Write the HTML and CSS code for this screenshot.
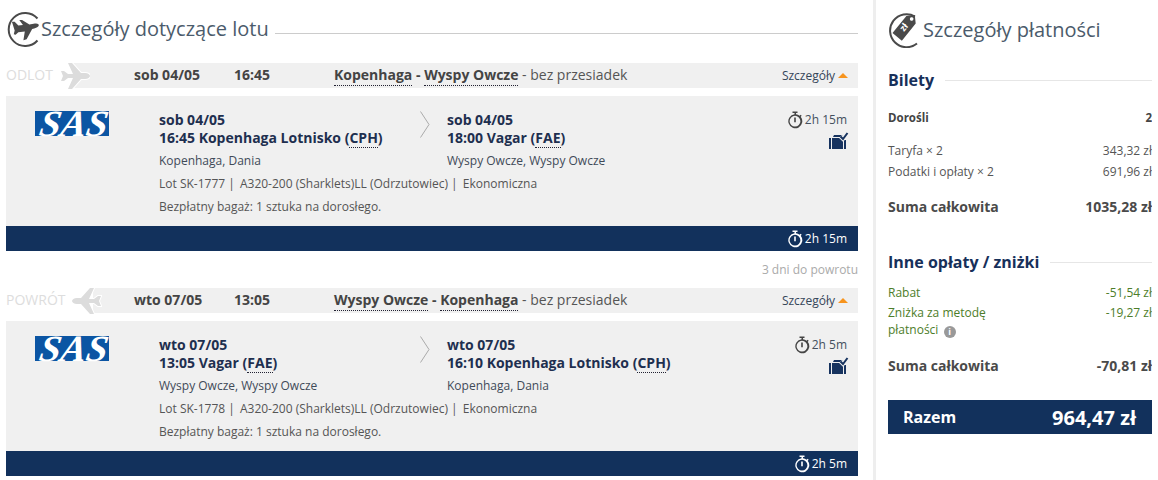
FILE: index.html
```html
<!DOCTYPE html>
<html lang="pl">
<head>
<meta charset="utf-8">
<title>Szczegóły</title>
<link rel="stylesheet" href="styles.css">
</head>
<body>
<svg class="defs" width="0" height="0" aria-hidden="true">
  <defs>
    <symbol id="plane" viewBox="0 0 30 26"><path d="M1 8 L4 8 L8 11 L13 11 L8 0 L12 0 L21 10 L25 10 C28 10 30 11.500 30 13 C30 14.500 28 16 25 16 L21 16 L12 26 L8 26 L13 15 L8 15 L4 18 L1 18 L3 13 Z"/></symbol>
    <symbol id="watch" viewBox="0 0 16 18"><path d="M5.500 0.500h5v1.600h-1.500v1.200a7 7 0 0 1 3.600 1.400l1-1 1.100 1.100-1 1a7 7 0 1 1-6.200-2.500v-1.200H5.500z M8 4.800a5.400 5.400 0 1 0 0 10.800a5.400 5.400 0 0 0 0-10.800z M7.200 6.500h1.600v4.800H7.200z"/></symbol>
    <symbol id="bag" viewBox="0 0 20 17"><path d="M0 6h2v11H0z M3 6h11v11H3z M5 3h8l1 2H4z" /><path d="M15 8h2v9h-2z"/><path d="M11.500 4.500l2.500 2.500l4.500-6" fill="none" stroke="#f0f0f0" stroke-width="4"/><path d="M11.500 4.500l2.500 2.500l4.500-6" fill="none" stroke="currentColor" stroke-width="2"/></symbol>
  </defs>
</svg>
<div class="page">
  <main class="flight-col">
    <header class="heading">
      <svg class="head-icon" viewBox="0 0 36 36"><path class="ring" d="M31.500 7.500A16.500 16.500 0 1 0 31.500 29.500"/><g transform="translate(5 8) scale(.92)"><path d="M1 3 L4 3 L8 7 L13 6.500 L9 1 L12 1 L20 6 L26 5 C29 4.500 31 6 30 7.500 C29 9 26 10 23 11 L17 22 L13.500 23 L15 13.500 L8 14.500 L5 17 L3 16.500 L4 12.500 Z"/></g></svg>
      <h1 class="heading-text">Szczegóły dotyczące lotu</h1>
      <span class="rule"></span>
    </header>

    <section class="leg">
      <div class="summary">
        <span class="summary-label label-out">ODLOT</span>
        <svg class="summary-plane plane-out"><use href="#plane"/></svg>
        <span class="summary-date">sob 04/05</span>
        <span class="summary-time">16:45</span>
        <span class="summary-route"><b class="dotted">Kopenhaga</b> <b>-</b> <b class="dotted">Wyspy Owcze</b> - bez przesiadek</span>
        <span class="summary-more">Szczegóły <i class="tri"></i></span>
      </div>
      <div class="card">
        <div class="logo-cell"><svg class="sas" viewBox="0 0 74 25"><rect width="74" height="25"/><text transform="translate(37 24.500) skewX(-10)" textLength="68" lengthAdjust="spacingAndGlyphs" text-anchor="middle">SAS</text></svg></div>
        <div class="stops">
          <div class="stop-row">
            <div class="stop">
              <p class="strong">sob 04/05</p>
              <p class="strong">16:45 Kopenhaga Lotnisko (<span class="dotted">CPH</span>)</p>
              <p class="city">Kopenhaga, Dania</p>
            </div>
            <svg class="chev" viewBox="0 0 10 27"><path d="M.5.500l8.500 13l-8.500 13"/></svg>
            <div class="stop">
              <p class="strong">sob 04/05</p>
              <p class="strong">18:00 Vagar (<span class="dotted">FAE</span>)</p>
              <p class="city">Wyspy Owcze, Wyspy Owcze</p>
            </div>
          </div>
          <p class="meta">Lot SK-1777 <span class="sep">|</span> A320-200 (Sharklets)LL (Odrzutowiec) <span class="sep">|</span> Ekonomiczna</p>
          <p class="meta">Bezpłatny bagaż: 1 sztuka na dorosłego.</p>
        </div>
        <div class="side">
          <span class="dur"><svg class="watch"><use href="#watch"/></svg>2h 15m</span>
          <svg class="bag"><use href="#bag"/></svg>
        </div>
      </div>
      <div class="total-bar"><svg class="watch"><use href="#watch"/></svg>2h 15m</div>
    </section>

    <p class="gap-note">3 dni do powrotu</p>

    <section class="leg">
      <div class="summary">
        <span class="summary-label label-back">POWRÓT</span>
        <svg class="summary-plane plane-back"><use href="#plane"/></svg>
        <span class="summary-date">wto 07/05</span>
        <span class="summary-time">13:05</span>
        <span class="summary-route"><b class="dotted">Wyspy Owcze</b> <b>-</b> <b class="dotted">Kopenhaga</b> - bez przesiadek</span>
        <span class="summary-more">Szczegóły <i class="tri"></i></span>
      </div>
      <div class="card">
        <div class="logo-cell"><svg class="sas" viewBox="0 0 74 25"><rect width="74" height="25"/><text transform="translate(37 24.500) skewX(-10)" textLength="68" lengthAdjust="spacingAndGlyphs" text-anchor="middle">SAS</text></svg></div>
        <div class="stops">
          <div class="stop-row">
            <div class="stop">
              <p class="strong">wto 07/05</p>
              <p class="strong">13:05 Vagar (<span class="dotted">FAE</span>)</p>
              <p class="city">Wyspy Owcze, Wyspy Owcze</p>
            </div>
            <svg class="chev" viewBox="0 0 10 27"><path d="M.5.500l8.500 13l-8.500 13"/></svg>
            <div class="stop">
              <p class="strong">wto 07/05</p>
              <p class="strong">16:10 Kopenhaga Lotnisko (<span class="dotted">CPH</span>)</p>
              <p class="city">Kopenhaga, Dania</p>
            </div>
          </div>
          <p class="meta">Lot SK-1778 <span class="sep">|</span> A320-200 (Sharklets)LL (Odrzutowiec) <span class="sep">|</span> Ekonomiczna</p>
          <p class="meta">Bezpłatny bagaż: 1 sztuka na dorosłego.</p>
        </div>
        <div class="side">
          <span class="dur"><svg class="watch"><use href="#watch"/></svg>2h 5m</span>
          <svg class="bag"><use href="#bag"/></svg>
        </div>
      </div>
      <div class="total-bar"><svg class="watch"><use href="#watch"/></svg>2h 5m</div>
    </section>
  </main>

  <aside class="pay-col">
    <header class="heading pay-heading">
      <svg class="head-icon pay-icon" viewBox="0 0 33 36"><path class="ring" d="M27 4.500A16.500 16.500 0 1 0 29 31.500"/><g transform="rotate(39 18 14)"><path d="M12 6 L18 0 L24 6 L24 28 L12 28 Z M18 3.200a1.800 1.800 0 1 0 .01 0z" fill-rule="evenodd"/></g><text class="tag-text" transform="translate(16 20) rotate(-51)">zł</text></svg>
      <h2 class="heading-text">Szczegóły płatności</h2>
    </header>

    <div class="section-head head-tickets"><h3>Bilety</h3><span class="rule-light"></span></div>
    <div class="row row-adults"><span>Dorośli</span><span>2</span></div>
    <div class="row row-fare"><span>Taryfa × 2</span><span>343,32 zł</span></div>
    <div class="row row-tax"><span>Podatki i opłaty × 2</span><span>691,96 zł</span></div>
    <div class="row row-sum sum-one"><span>Suma całkowita</span><span>1035,28 zł</span></div>

    <div class="section-head head-other"><h3>Inne opłaty / zniżki</h3><span class="rule-light"></span></div>
    <div class="row row-green"><span>Rabat</span><span>-51,54 zł</span></div>
    <div class="row row-green row-disc"><span class="disc-label">Zniżka za metodę<br>płatności <i class="info">i</i></span><span>-19,27 zł</span></div>
    <div class="row row-sum sum-two"><span>Suma całkowita</span><span>-70,81 zł</span></div>

    <div class="grand"><span class="grand-label">Razem</span><span class="grand-value">964,47 zł</span></div>
  </aside>
</div>
</body>
</html>
```
FILE: styles.css
```css
* { box-sizing: border-box; }
html, body { margin: 0; padding: 0; background: #fff; }
body { width: 1158px; height: 480px; overflow: hidden; font-family: "Open Sans", "Noto Sans", sans-serif; font-size: 12px; color: #4a4a4a; }
p, h1, h2, h3 { margin: 0; font-weight: normal; }
.defs { position: absolute; }
.page { display: flex; align-items: flex-start; height: 480px; padding-left: 6px; }

.flight-col { width: 852px; flex: none; }
.heading { display: flex; align-items: center; height: 63px; padding-bottom: 5px; }
.head-icon { width: 36px; height: 36px; flex: none; fill: #4a4a4a; margin-right: -1px; }
.ring { fill: none; stroke: #4a4a4a; stroke-width: 2; }
.heading-text { font-size: 20px; line-height: 28px; color: #4b5b6b; white-space: nowrap; }
.rule { flex: 1; height: 1px; background: #ccc; margin: 9px 0 0 6px; }

.summary { position: relative; display: flex; align-items: center; height: 25px; background: #f0f0f0; font-size: 14px; line-height: 25px; }
.summary-label { align-self: stretch; background: #fff; color: #ddd; font-size: 14px; line-height: 23px; }
.label-out { width: 66px; }
.label-back { width: 87px; }
.summary-plane { position: absolute; width: 30px; height: 26px; top: 0; fill: #dcdcdc; stroke: #fff; stroke-width: 2; paint-order: stroke; overflow: visible; }
.plane-out { left: 54px; }
.plane-back { left: 66px; transform: scaleX(-1); }
.summary-date, .summary-time { position: absolute; top: -1px; font-weight: 700; color: #444; }
.summary-date { left: 128px; }
.summary-time { left: 228px; }
.summary-route { position: absolute; top: -1px; left: 328px; color: #555; white-space: nowrap; }
.summary-route b { color: #444; font-weight: 700; }
.dotted { border-bottom: 1px dotted #223; }
.summary-route .dotted { padding-bottom: 1px; }
.summary-more { position: absolute; right: 10px; font-size: 12px; color: #36465a; display: flex; align-items: center; gap: 3px; }
.tri { width: 0; height: 0; border: 5px solid transparent; border-top: 0; border-bottom: 5px solid #f7941d; }

.card { display: flex; height: 130px; margin-top: 8px; background: #f0f0f0; }
.logo-cell { width: 153px; padding: 15px 0 0 29px; flex: none; }
.sas { display: block; width: 74px; height: 25px; fill: #0b55a3; overflow: visible; }
.sas text { font: italic 700 37px "Liberation Serif", serif; fill: #fff; }
.stops { flex: 1; padding-top: 15px; }
.stop-row { display: flex; }
.stop { width: 261px; }
.stop + .chev + .stop { width: auto; }
.strong { font-size: 14px; font-weight: 700; line-height: 18px; color: #1e2f4f; white-space: nowrap; }
.city { font-size: 12px; line-height: 17px; margin-top: 5px; color: #3f4a58; white-space: nowrap; }
.chev { width: 10px; height: 27px; flex: none; margin-right: 17px; fill: none; stroke: #aaa; }
.meta { font-size: 12px; line-height: 17px; margin-top: 6px; color: #555; white-space: nowrap; }
.sep { margin-right: 2px; }
.side { width: 130px; padding: 15px 11px 0 0; display: flex; flex-direction: column; align-items: flex-end; }
.dur { display: flex; align-items: center; gap: 2px; line-height: 18px; font-size: 12px; color: #44505e; }
.watch { width: 16px; height: 18px; fill: currentColor; flex: none; }
.dur .watch { color: #444; }
.bag { width: 20px; height: 17px; margin-top: 3px; margin-right: -2px; fill: #17335f; color: #17335f; }
.total-bar { display: flex; justify-content: flex-end; align-items: center; gap: 2px; height: 25px; padding-right: 11px; background: #12315c; color: #fff; font-size: 12px; }

.gap-note { height: 37px; text-align: right; font-size: 12px; line-height: 38px; color: #aaa; }

.pay-col { width: 279px; height: 480px; flex: none; margin-left: 15px; padding-left: 12px; border-left: 3px solid #eee; overflow: hidden; }
.pay-heading { height: 59px; padding-bottom: 0; }
.pay-icon { width: 33px; margin-right: 2px; }
.tag-text { font: 700 9px "Open Sans", sans-serif; fill: #fff; }
.section-head { display: flex; align-items: center; }
.section-head h3 { font-size: 16px; line-height: 22px; font-weight: 700; color: #17305a; white-space: nowrap; }
.rule-light { flex: 1; height: 1px; background: #e6e6e6; margin-left: 11px; }
.row { display: flex; justify-content: space-between; font-size: 12px; line-height: 17px; color: #555; white-space: nowrap; }
.head-tickets { margin-top: 10px; }
.row-adults { font-weight: 700; margin-top: 18px; font-size: 11.500px; color: #444; }
.row-fare { margin-top: 16px; }
.row-tax { margin-top: 4px; }
.row-sum { font-size: 14px; font-weight: 700; color: #4a4a4a; line-height: 18px; }
.sum-one { margin-top: 18px; }
.head-other { margin-top: 35px; }
.row-green { color: #4d7d2a; }
.head-other + .row-green { margin-top: 11px; }
.row-disc { margin-top: 3px; }
.disc-label { display: block; }
.info { display: inline-block; width: 12px; height: 12px; margin-left: 2px; border-radius: 50%; background: #999; color: #fff; font: 700 9px/12px "Open Sans", sans-serif; text-align: center; vertical-align: -1px; }
.sum-two { margin-top: 19px; }
.grand { display: flex; justify-content: space-between; align-items: center; height: 34px; margin-top: 25px; padding: 0 16px 0 15px; background: #12315c; color: #fff; font-weight: 700; }
.grand-label { font-size: 16px; }
.grand-value { font-size: 20px; }
```
